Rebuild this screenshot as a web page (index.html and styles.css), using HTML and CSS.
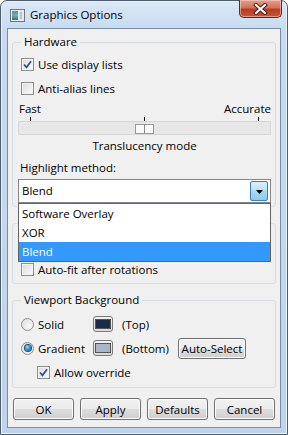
FILE: index.html
```html
<!DOCTYPE html>
<html>
<head>
<meta charset="utf-8">
<link rel="stylesheet" href="styles.css">
</head>
<body>
<div class="window">
  <div class="titlebar">
    <svg class="appicon" width="15" height="13" viewBox="0 0 15 13">
      <defs>
        <linearGradient id="ig" x1="0" y1="0" x2="0" y2="1">
          <stop offset="0" stop-color="#5a8fb0"/>
          <stop offset="0.5" stop-color="#6fb09a"/>
          <stop offset="1" stop-color="#3d6f8c"/>
        </linearGradient>
      </defs>
      <rect x="0.5" y="0.5" width="14" height="12" fill="#e8eef4" stroke="#6b7480"/>
      <rect x="2" y="2" width="6" height="9" fill="url(#ig)"/>
      <rect x="9" y="2" width="4" height="9" fill="#dfe6ec"/>
      <rect x="10" y="3" width="2" height="7" fill="#b7c3cf"/>
    </svg>
    <span class="title">Graphics Options</span>
    <div class="close">
      <svg width="15" height="12" viewBox="0 0 15 12">
        <path d="M3 2 L12 10 M12 2 L3 10" stroke="#4a1a12" stroke-width="4" stroke-linecap="square"/>
        <path d="M3 2 L12 10 M12 2 L3 10" stroke="#ffffff" stroke-width="2.2" stroke-linecap="square"/>
      </svg>
    </div>
  </div>
  <div class="client">
    <fieldset class="group hw">
      <legend>Hardware</legend>
      <div class="row"><span class="cb checked"><svg width="9" height="9" viewBox="0 0 9 9"><path d="M1 4.5 L3.5 7.3 L8 1.2" fill="none" stroke="#344f8e" stroke-width="1.7"/></svg></span>Use display lists</div>
      <div class="row"><span class="cb"></span>Anti-alias lines</div>
      <div class="scale"><span>Fast</span><span>Accurate</span></div>
      <div class="ticks"><i></i><i></i><i></i></div>
      <div class="track"><span class="thumb"></span></div>
      <div class="caption">Translucency mode</div>
      <div class="label">Highlight method:</div>
      <div class="combo">
        <span class="combo-text">Blend</span>
        <span class="dropbtn"><svg width="7" height="4" viewBox="0 0 7 4"><path d="M0 0 H7 L3.5 4 Z" fill="#000"/></svg></span>
        <ul class="droplist">
          <li>Software Overlay</li>
          <li>XOR</li>
          <li class="sel">Blend</li>
        </ul>
      </div>
    </fieldset>
    <fieldset class="group view">
      <div class="row"><span class="cb"></span>Auto-fit after rotations</div>
    </fieldset>
    <fieldset class="group bg">
      <legend>Viewport Background</legend>
      <div class="row">
        <span class="radio"></span><span class="rlabel">Solid</span>
        <span class="swatch"><span class="color top"></span></span>
        <span class="note">(Top)</span>
      </div>
      <div class="row">
        <span class="radio on"></span><span class="rlabel">Gradient</span>
        <span class="swatch"><span class="color bottom"></span></span>
        <span class="note">(Bottom)</span>
        <span class="btn small">Auto-Select</span>
      </div>
      <div class="row indent"><span class="cb checked"><svg width="9" height="9" viewBox="0 0 9 9"><path d="M1 4.5 L3.5 7.3 L8 1.2" fill="none" stroke="#344f8e" stroke-width="1.7"/></svg></span>Allow override</div>
    </fieldset>
    <div class="buttons">
      <span class="btn">OK</span>
      <span class="btn">Apply</span>
      <span class="btn">Defaults</span>
      <span class="btn">Cancel</span>
    </div>
  </div>
</div>
</body>
</html>
```
FILE: styles.css
```css
html, body {
  margin: 0;
  padding: 0;
  background: #ffffff;
}
body {
  font-family: "Open Sans", "Liberation Sans", sans-serif;
  font-size: 11.5px;
  color: #000;
}
.window {
  position: relative;
  width: 286px;
  height: 433px;
  border: 1px solid #4e5d6e;
  border-radius: 7px 7px 0 0;
  background: linear-gradient(180deg, #dbe8f6 0px, #c6dbf0 30px, #bfd4ec 100%);
  box-shadow: inset 0 0 0 1px #e9f1fa;
}
.titlebar {
  height: 27px;
  display: flex;
  align-items: center;
  padding-left: 9px;
}
.appicon {
  display: block;
  margin-top: 1px;
}
.title {
  margin-left: 5px;
  font-size: 11.5px;
  line-height: 16px;
  color: #000;
}
.close {
  position: absolute;
  top: -1px;
  right: 5px;
  width: 41px;
  height: 17px;
  border: 1px solid #6b2518;
  border-top: none;
  border-radius: 0 0 5px 5px;
  background: linear-gradient(180deg, #e3a08f 0%, #d27259 45%, #bb3a22 55%, #c4553a 100%);
  box-shadow: inset 0 0 0 1px rgba(255,220,210,0.5);
  display: flex;
  align-items: center;
  justify-content: center;
}
.close svg { display: block; }
.client {
  margin: 0 6px;
  height: 393px;
  border: 1px solid #7b8da2;
  background: #f0f0f0;
  padding: 5px 4px 0 4px;
}
.group {
  margin: 0;
  border: 1px solid #d5dfe5;
  border-radius: 3px;
  padding: 0 4px 0 5px;
  min-width: 0;
}
.group legend {
  padding: 0 3px;
  margin-left: 3px;
  line-height: 16px;
  height: 16px;
}
.hw {
  padding-top: 2px;
  padding-bottom: 3px;
}
.row {
  height: 24px;
  display: flex;
  align-items: center;
  padding-left: 3px;
}
.cb {
  width: 11px;
  height: 11px;
  border: 1px solid #8e8f8f;
  background: linear-gradient(135deg, #dcdcdc, #fbfbfb);
  box-shadow: inset 0 0 0 1px #f4f4f4;
  margin-right: 4px;
  display: flex;
  align-items: center;
  justify-content: center;
  flex: none;
}
.cb svg { display: block; }
.scale {
  height: 16px;
  display: flex;
  justify-content: space-between;
  align-items: center;
  padding-left: 1px;
}
.ticks {
  height: 5px;
  display: flex;
  justify-content: space-between;
  align-items: flex-end;
  padding: 0 12px;
}
.ticks i {
  width: 1px;
  height: 4px;
  background: #000;
}
.track {
  height: 12px;
  border: 1px solid #d6d6d6;
  background: #e7e7e7;
  display: flex;
  justify-content: center;
  align-items: center;
}
.thumb {
  width: 17px;
  height: 8px;
  border: 1px solid #9a9a9a;
  background: linear-gradient(90deg, #f8f8f8 0, #f8f8f8 8px, #8a8a8a 8px, #8a8a8a 9px, #f8f8f8 9px);
  margin-top: 2px;
}
.caption {
  height: 16px;
  line-height: 16px;
  margin-top: 3px;
  text-align: center;
}
.label {
  height: 16px;
  line-height: 16px;
  margin-top: 6px;
  padding-left: 2px;
}
.combo {
  position: relative;
  margin-top: 3px;
  height: 22px;
  border: 1px solid #7f8690;
  background: #fff;
  display: flex;
  align-items: center;
  justify-content: space-between;
  padding: 0 1px 0 3px;
}
.combo-text { line-height: 16px; }
.dropbtn {
  width: 16px;
  height: 18px;
  border: 1px solid #3c7fb1;
  border-radius: 2px;
  background: linear-gradient(180deg, #d9f0fc 0%, #bfe3f8 45%, #a7d9f5 50%, #8ccbee 100%);
  display: flex;
  align-items: center;
  justify-content: center;
  margin-right: 1px;
}
.dropbtn svg { display: block; margin-top: 1px; }
.droplist {
  position: absolute;
  top: 23px;
  left: -1px;
  right: -1px;
  margin: 0;
  padding: 0;
  list-style: none;
  background: #fff;
  border: 1px solid #646464;
  z-index: 5;
}
.droplist li {
  height: 19px;
  line-height: 19px;
  padding-left: 3px;
}
.droplist li.sel {
  background: #3399ff;
  color: #fff;
}
.view {
  margin-top: 16px;
  padding-top: 33px;
  padding-bottom: 2px;
}
.bg {
  margin-top: 8px;
  padding-top: 4px;
  padding-bottom: 3px;
}
.radio {
  width: 11px;
  height: 11px;
  border: 1px solid #8e8f8f;
  border-radius: 50%;
  background: radial-gradient(circle at 65% 65%, #fafafa, #d8d8d8);
  margin-right: 4px;
  flex: none;
  display: flex;
  align-items: center;
  justify-content: center;
}
.radio.on::after {
  content: "";
  width: 6px;
  height: 6px;
  border-radius: 50%;
  background: radial-gradient(circle at 40% 35%, #9fe3ff 0, #2a8fd8 45%, #0f3f7a 100%);
  box-shadow: 0 0 0 1px #1c4a78;
}
.rlabel {
  width: 55px;
  flex: none;
}
.swatch {
  width: 18px;
  height: 14px;
  border: 1px solid #7a7a7a;
  border-radius: 3px;
  background: linear-gradient(180deg, #f4f4f4, #d9d9d9);
  display: flex;
  align-items: center;
  justify-content: center;
  flex: none;
}
.color {
  width: 14px;
  height: 8px;
  border: 1px solid #555;
}
.color.top { background: #1b2a48; }
.color.bottom { background: #a9b5ca; }
.note {
  margin-left: 9px;
  width: 56px;
  flex: none;
}
.indent { padding-left: 19px; }
.btn {
  box-sizing: border-box;
  width: 61px;
  height: 22px;
  border: 1px solid #707070;
  border-radius: 3px;
  background: linear-gradient(180deg, #f2f2f2 0%, #ebebeb 50%, #dddddd 50%, #cfcfcf 100%);
  box-shadow: inset 0 0 0 1px #fcfcfc;
  display: flex;
  align-items: center;
  justify-content: center;
  flex: none;
}
.btn.small {
  width: 68px;
  height: 21px;
}
.buttons {
  display: flex;
  gap: 6px;
  margin-top: 10px;
  padding-left: 1px;
}
```
